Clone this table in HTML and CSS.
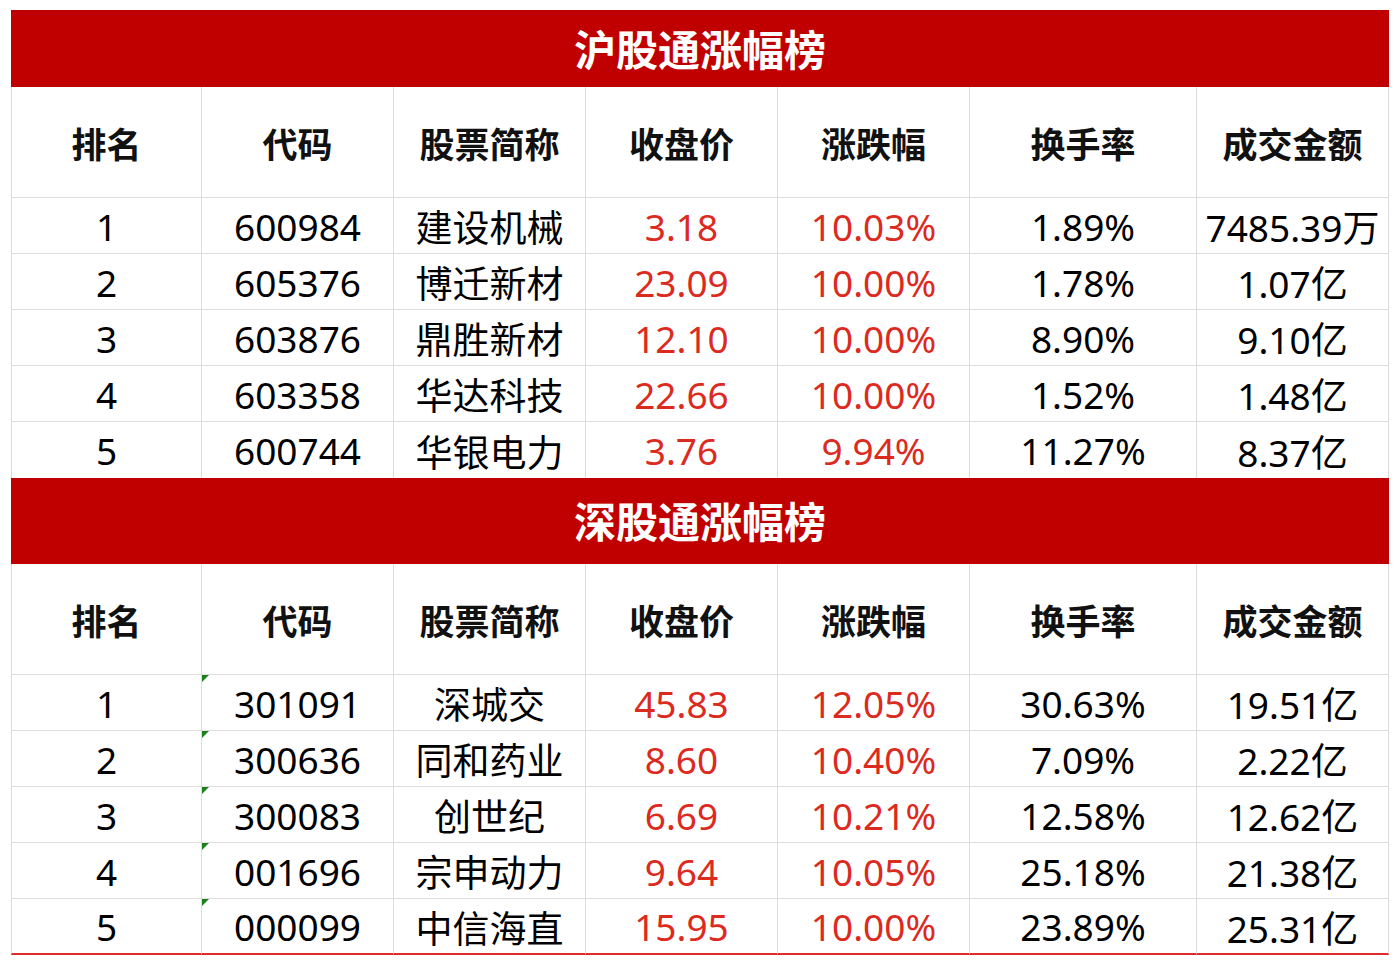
FILE: index.html
```html
<!DOCTYPE html>
<html lang="zh-CN">
<head>
<meta charset="utf-8">
<title>涨幅榜</title>
<link rel="stylesheet" href="styles.css">
</head>
<body>
<div class="page">
<section class="board">
  <div class="title t1">沪股通涨幅榜</div>
  <div class="cell head">排名</div>
  <div class="cell head">代码</div>
  <div class="cell head">股票简称</div>
  <div class="cell head">收盘价</div>
  <div class="cell head">涨跌幅</div>
  <div class="cell head">换手率</div>
  <div class="cell head">成交金额</div>

  <div class="cell">1</div><div class="cell">600984</div><div class="cell">建设机械</div><div class="cell up">3.18</div><div class="cell up">10.03%</div><div class="cell">1.89%</div><div class="cell">7485.39万</div>
  <div class="cell">2</div><div class="cell">605376</div><div class="cell">博迁新材</div><div class="cell up">23.09</div><div class="cell up">10.00%</div><div class="cell">1.78%</div><div class="cell">1.07亿</div>
  <div class="cell">3</div><div class="cell">603876</div><div class="cell">鼎胜新材</div><div class="cell up">12.10</div><div class="cell up">10.00%</div><div class="cell">8.90%</div><div class="cell">9.10亿</div>
  <div class="cell">4</div><div class="cell">603358</div><div class="cell">华达科技</div><div class="cell up">22.66</div><div class="cell up">10.00%</div><div class="cell">1.52%</div><div class="cell">1.48亿</div>
  <div class="cell nb">5</div><div class="cell nb">600744</div><div class="cell nb">华银电力</div><div class="cell nb up">3.76</div><div class="cell nb up">9.94%</div><div class="cell nb">11.27%</div><div class="cell nb">8.37亿</div>
</section>

<section class="board">
  <div class="title t2">深股通涨幅榜</div>
  <div class="cell head">排名</div>
  <div class="cell head">代码</div>
  <div class="cell head">股票简称</div>
  <div class="cell head">收盘价</div>
  <div class="cell head">涨跌幅</div>
  <div class="cell head">换手率</div>
  <div class="cell head">成交金额</div>

  <div class="cell">1</div><div class="cell flag">301091</div><div class="cell">深城交</div><div class="cell up">45.83</div><div class="cell up">12.05%</div><div class="cell">30.63%</div><div class="cell">19.51亿</div>
  <div class="cell">2</div><div class="cell flag">300636</div><div class="cell">同和药业</div><div class="cell up">8.60</div><div class="cell up">10.40%</div><div class="cell">7.09%</div><div class="cell">2.22亿</div>
  <div class="cell">3</div><div class="cell flag">300083</div><div class="cell">创世纪</div><div class="cell up">6.69</div><div class="cell up">10.21%</div><div class="cell">12.58%</div><div class="cell">12.62亿</div>
  <div class="cell">4</div><div class="cell flag">001696</div><div class="cell">宗申动力</div><div class="cell up">9.64</div><div class="cell up">10.05%</div><div class="cell">25.18%</div><div class="cell">21.38亿</div>
  <div class="cell last">5</div><div class="cell last flag">000099</div><div class="cell last">中信海直</div><div class="cell last up">15.95</div><div class="cell last up">10.00%</div><div class="cell last">23.89%</div><div class="cell last">25.31亿</div>
</section>
</div>
</body>
</html>
```

FILE: styles.css
```css
* {
  box-sizing: border-box;
}

html, body {
  margin: 0;
  padding: 0;
  background: #ffffff;
}

body {
  font-family: "Noto Sans", "Noto Sans CJK SC", sans-serif;
  color: #000000;
}

.page {
  width: 1378px;
  margin: 10px 0 0 11px;
}

.board {
  display: grid;
  grid-template-columns: 191px 192px 192px 192px 192px 227px 192px;
}

.title {
  grid-column: 1 / -1;
  background: #c00000;
  color: #ffffff;
  font-family: "Noto Sans CJK SC", sans-serif;
  font-weight: 700;
  font-size: 42px;
  display: flex;
  align-items: center;
  justify-content: center;
  padding-bottom: 3px;
}

.t1 {
  height: 77px;
}

.t2 {
  height: 86px;
}

.cell {
  position: relative;
  height: 56px;
  display: flex;
  align-items: center;
  justify-content: center;
  font-size: 37px;
  border-right: 1px solid #dcdcdc;
  border-bottom: 1px solid #dcdcdc;
  white-space: nowrap;
  padding-top: 1px;
}

.cell:nth-child(7n+2) {
  border-left: 1px solid #dcdcdc;
}

.cell.head {
  height: 111px;
  font-family: "Noto Sans CJK SC", sans-serif;
  font-weight: 700;
  font-size: 35px;
  color: #111111;
  padding-top: 0;
}

.cell.nb {
  border-bottom: none;
}

.cell.last {
  border-bottom: 2px solid #e22a2a;
}

.up {
  color: #dc2a1e;
}

.flag::before {
  content: "";
  position: absolute;
  top: 0;
  left: 0;
  width: 0;
  height: 0;
  border-top: 7px solid #1d7f1d;
  border-right: 7px solid transparent;
}
```
